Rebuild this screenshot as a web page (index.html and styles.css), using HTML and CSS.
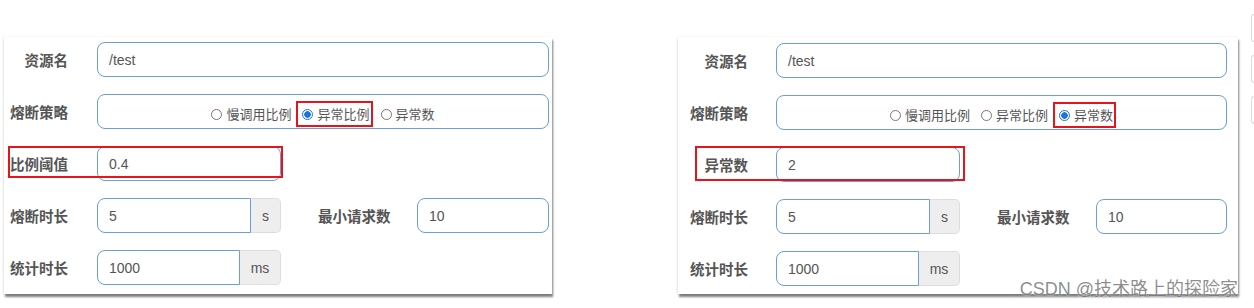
FILE: index.html
```html
<!DOCTYPE html>
<html lang="zh-CN">
<head>
    <meta charset="UTF-8">
    <title>熔断规则</title>
    <link rel="stylesheet" href="styles.css">
</head>
<body>
<div class="page">
    <div class="card card-a">
        <div class="row">
            <label class="lbl">资源名</label>
            <div class="field"><span class="val">/test</span></div>
        </div>
        <div class="row">
            <label class="lbl">熔断策略</label>
            <div class="field radios">
                <span class="opt"><i class="dot"></i>慢调用比例</span>
                <span class="opt marked"><i class="dot on"></i>异常比例</span>
                <span class="opt"><i class="dot"></i>异常数</span>
            </div>
        </div>
        <div class="row">
            <label class="lbl">比例阈值</label>
            <div class="field short"><span class="val">0.4</span></div>
            <span class="mark"></span>
        </div>
        <div class="row">
            <label class="lbl">熔断时长</label>
            <div class="group">
                <div class="field"><span class="val">5</span></div>
                <span class="addon">s</span>
            </div>
            <label class="lbl lbl-min">最小请求数</label>
            <div class="field"><span class="val">10</span></div>
        </div>
        <div class="row">
            <label class="lbl">统计时长</label>
            <div class="group">
                <div class="field"><span class="val">1000</span></div>
                <span class="addon wide">ms</span>
            </div>
        </div>
    </div>

    <div class="card card-b">
        <div class="row">
            <label class="lbl">资源名</label>
            <div class="field"><span class="val">/test</span></div>
        </div>
        <div class="row">
            <label class="lbl">熔断策略</label>
            <div class="field radios">
                <span class="opt"><i class="dot"></i>慢调用比例</span>
                <span class="opt"><i class="dot"></i>异常比例</span>
                <span class="opt marked"><i class="dot on"></i>异常数</span>
            </div>
        </div>
        <div class="row">
            <label class="lbl">异常数</label>
            <div class="field short"><span class="val">2</span></div>
            <span class="mark"></span>
        </div>
        <div class="row">
            <label class="lbl">熔断时长</label>
            <div class="group">
                <div class="field"><span class="val">5</span></div>
                <span class="addon">s</span>
            </div>
            <label class="lbl lbl-min">最小请求数</label>
            <div class="field"><span class="val">10</span></div>
        </div>
        <div class="row">
            <label class="lbl">统计时长</label>
            <div class="group">
                <div class="field"><span class="val">1000</span></div>
                <span class="addon wide">ms</span>
            </div>
        </div>
        <span class="watermark">CSDN @技术路上的探险家</span>
    </div>

    <div class="peek">
        <span class="stub"></span>
        <span class="stub"></span>
        <span class="stub"></span>
    </div>
</div>
</body>
</html>
```

FILE: styles.css
```css
body {
    margin: 0;
    background: #fff;
    font-family: "Liberation Sans", "Noto Sans CJK SC", sans-serif;
    color: #555;
}
.page {
    display: flex;
    align-items: flex-start;
    height: 308px;
    overflow: hidden;
    padding-left: 4px;
}
.card {
    position: relative;
    flex-shrink: 0;
    margin-top: 37px;
    height: 257px;
    box-sizing: border-box;
    background: #fff;
    display: flex;
    flex-direction: column;
    gap: 17px;
    box-shadow: 1px 3px 2px rgba(0, 0, 0, 0.5), -1px 0 2px rgba(0, 0, 0, 0.08);
}
.card-a {
    width: 548px;
    padding: 5px 3px 0 0;
    margin-right: 126px;
    --lbl: 64px;
    --gap: 29px;
}
.card-b {
    width: 560px;
    padding: 6px 11px 0 0;
    --lbl: 70px;
    --gap: 28px;
}
.row {
    position: relative;
    display: flex;
    align-items: center;
    height: 35px;
}
.lbl {
    width: var(--lbl);
    margin-right: var(--gap);
    flex-shrink: 0;
    text-align: right;
    white-space: nowrap;
    font-family: "Noto Sans CJK SC", sans-serif;
    font-weight: bold;
    font-size: 14.5px;
    color: #555;
}
.lbl-min {
    width: 72px;
    margin-left: 37px;
    margin-right: 27px;
}
.field {
    flex: 1;
    height: 35px;
    box-sizing: border-box;
    border: 1px solid #6b9fd6;
    border-radius: 8px;
    display: flex;
    align-items: center;
    padding-left: 11px;
    font-size: 14px;
    color: #555;
}
.field.short {
    flex: none;
    width: 184px;
}
.group {
    display: flex;
    width: 184px;
    height: 35px;
    flex-shrink: 0;
}
.group .field {
    border-radius: 8px 0 0 8px;
}
.addon {
    width: 30px;
    box-sizing: border-box;
    background: #eee;
    border: 1px solid #ddd;
    border-left: none;
    border-radius: 0 5px 5px 0;
    display: flex;
    align-items: center;
    justify-content: center;
    font-size: 14px;
    color: #555;
}
.addon.wide {
    width: 41px;
}
.radios {
    justify-content: center;
    padding-left: 0;
    gap: 11px;
    font-family: "Noto Sans CJK SC", sans-serif;
    font-size: 13px;
    padding-top: 5px;
}
.opt {
    position: relative;
    display: inline-flex;
    align-items: center;
    gap: 4px;
    line-height: 18px;
}
.opt.marked::after {
    content: "";
    position: absolute;
    top: -4px;
    bottom: -4px;
    left: -6px;
    right: -3px;
    border: 2px solid #e8141b;
}
.dot {
    width: 11px;
    height: 11px;
    box-sizing: border-box;
    border: 1px solid #777;
    border-radius: 50%;
    background: #fff;
}
.dot.on {
    border: 1px solid #1a73e8;
    background: radial-gradient(circle, #1a73e8 0 3px, #fff 3.5px);
}
.mark {
    position: absolute;
    top: 0;
    left: 4px;
    width: 275px;
    height: 32px;
    box-sizing: border-box;
    border: 2px solid #e8141b;
}
.card-b .mark {
    top: -1px;
    left: 17px;
    width: 270px;
    height: 35px;
}
.watermark {
    position: absolute;
    right: 0;
    bottom: -5px;
    line-height: 20px;
    font-size: 18px;
    color: rgba(90, 90, 90, 0.7);
    text-shadow: 0 0 2px #fff;
    white-space: nowrap;
}
.peek {
    flex-shrink: 0;
    margin-left: 13px;
    padding-top: 14px;
    display: flex;
    flex-direction: column;
    gap: 13px;
}
.stub {
    width: 10px;
    height: 26px;
    border: 1px solid #ddd;
    border-right: none;
    border-radius: 3px 0 0 3px;
}
```
